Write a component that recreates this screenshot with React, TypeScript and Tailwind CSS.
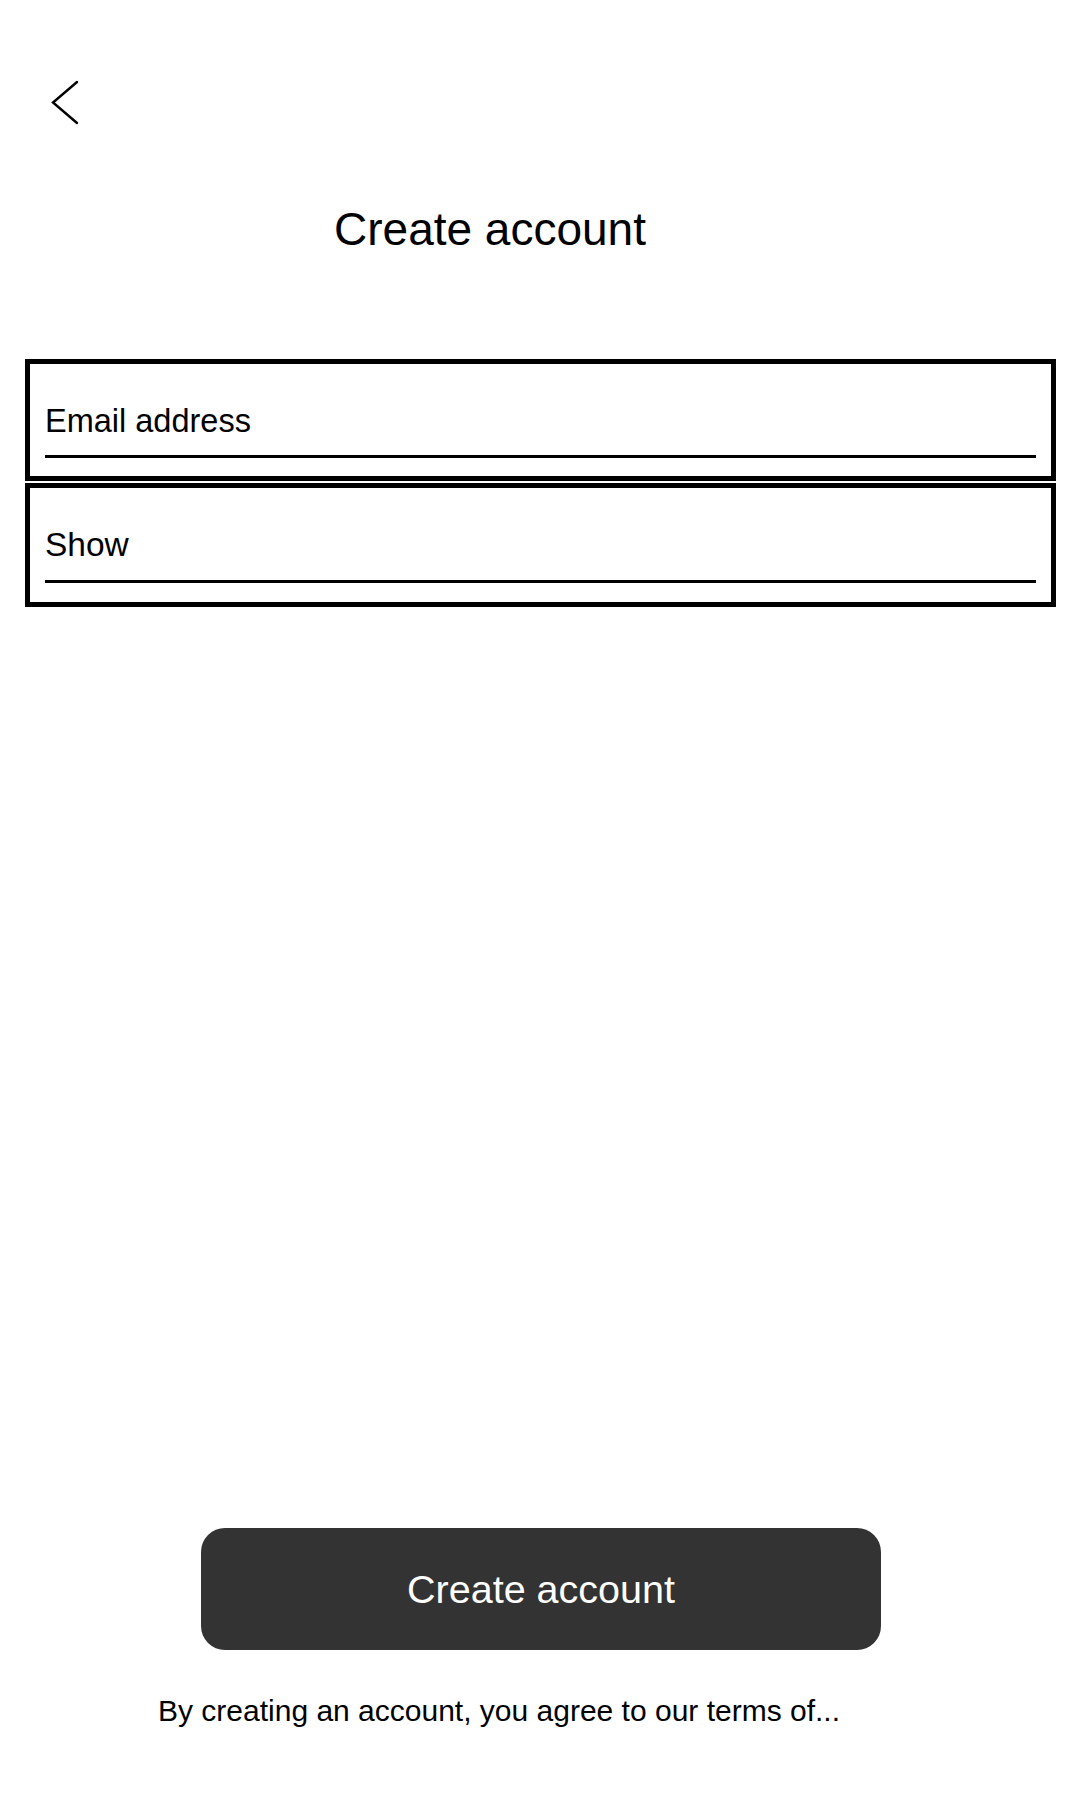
import React from "react";

// Create account screen: back chevron, title, two outlined fields with
// underlines, and a dark call-to-action pinned to the bottom.

function BackChevron() {
  return (
    <svg width="30" height="46" viewBox="0 0 30 46" fill="none" aria-hidden>
      <polyline points="27,2 3,22.5 27,43" stroke="#000" strokeWidth="2.4" strokeLinecap="round" strokeLinejoin="miter" />
    </svg>
  );
}

export default function App() {
  return (
    <div className="flex h-[1800px] w-[1080px] flex-col bg-white text-black [font-family:'Liberation_Sans',Arial,sans-serif]">
      {/* Header */}
      <button type="button" className="ml-[50px] mt-[80px] h-[46px] w-[30px]" aria-label="Back">
        <BackChevron />
      </button>

      <h1 className="mt-[77px] w-[980px] text-center text-[46px] font-normal leading-[53px]">Create account</h1>

      {/* Fields */}
      <div className="ml-[25px] mt-[103px] flex w-[1031px] flex-col">
        <div className="border-[5px] border-black px-[15px] pt-[39px] pb-[18px]">
          <div className="text-[32.5px] leading-[37px]">Email address</div>
          <div className="mt-[15px] h-[3px] bg-black" />
        </div>
        <div className="mt-[2px] border-[5px] border-black px-[15px] pt-[38px] pb-[19px]">
          <div className="text-[33.5px] leading-[37px]">Show</div>
          <div className="mt-[17px] h-[3px] bg-black" />
        </div>
      </div>

      <div className="flex-1" />

      {/* Footer */}
      <button
        type="button"
        className="ml-[201px] flex h-[122px] w-[680px] items-center justify-center rounded-[24px] bg-[#333333] text-[39.5px] leading-[46px] text-white"
      >
        Create account
      </button>
      <p className="mt-[43px] mb-[72px] pl-[158px] text-[30px] leading-[35px]">
        By creating an account, you agree to our terms of...
      </p>
    </div>
  );
}
